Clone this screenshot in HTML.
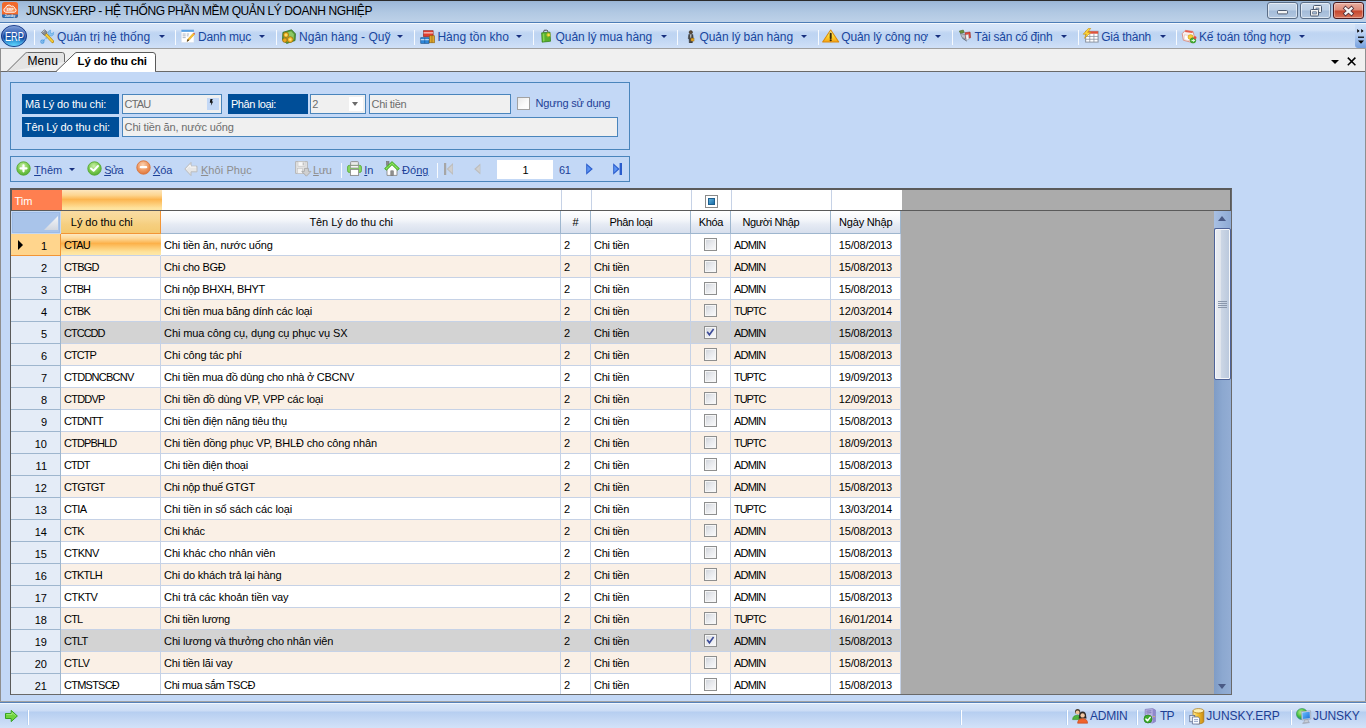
<!DOCTYPE html>
<html lang="vi"><head><meta charset="utf-8"><title>JUNSKY.ERP - HỆ THỐNG PHẦN MỀM QUẢN LÝ DOANH NGHIỆP</title>
<style>
*{box-sizing:border-box;margin:0;padding:0}
html,body{width:1366px;height:728px;overflow:hidden}
body{position:relative;background:#c3d8f6;font-family:"Liberation Sans",Arial,sans-serif;font-size:11px;color:#000}
.abs{position:absolute}
/* title bar */
#title{position:absolute;left:0;top:0;width:1366px;height:23px;background:linear-gradient(#98b3d2 0,#9fbada 2px,#b2c9e3 12px,#bdd1e8 21px,#bdd1e8 100%);border-top:1px solid #2a2a2a;border-bottom:1px solid #4d7db6}
#title .tx{position:absolute;left:26px;top:1.5px;font-size:12px;letter-spacing:-0.42px;line-height:16px;color:#000;white-space:nowrap}
.wb{position:absolute;top:1px;height:17px;width:31px;border:1px solid #5a6d86;border-radius:3px;background:linear-gradient(#c6d6e9 0,#bccfe5 48%,#a3bbd8 52%,#b3c8e1 100%);box-shadow:inset 0 0 0 1px rgba(255,255,255,.55)}
.wb.close{border-color:#4a1a1f;background:linear-gradient(#e9aea0 0,#dc8a78 48%,#c5452c 52%,#d8735a 100%);box-shadow:inset 0 0 0 1px rgba(255,255,255,.35)}
/* menu bar */
#menu{position:absolute;left:0;top:23px;width:1366px;height:25px;background:linear-gradient(#f4f8fd 0,#f4f8fd 1px,#d8e6f9 1px,#d2e2f7 7px,#c3d7f3 9px,#bed4f2 11px,#c2d7f3 17px,#d0e0f7 25px)}
.mi{position:absolute;top:29px;font-size:12px;line-height:16px;color:#19469e;white-space:nowrap}
.msep{position:absolute;top:30px;width:1px;height:15px;background:#f7fafe}
.marr{position:absolute;top:35px;width:0;height:0;border-left:3px solid transparent;border-right:3px solid transparent;border-top:3px solid #172f7e}
.mic{position:absolute;top:28.5px;width:16px;height:16px}
/* tab strip */
#tabs{position:absolute;left:0;top:48px;width:1366px;height:24px;background:#f0f0f0;border-top:1px solid #a0a0a0;border-bottom:1px solid #696969;border-left:1px solid #8f8f8f}
/* panels */
.panel{position:absolute;border:1px solid #4a85bc}
.lbl{position:absolute;height:20px;background:#004e98;color:#fff;font-size:11px;line-height:20px;white-space:nowrap;overflow:hidden}
.inp{position:absolute;height:20px;background:#f0f0f0;border:1px solid #4a85bc;color:#6d6d6d;font-size:11px;line-height:18px;white-space:nowrap;overflow:hidden}
.tb{position:absolute;top:163px;font-size:11px;line-height:14px;color:#1b3f96;white-space:nowrap}
.tb.dis{color:#8d8d8d}
.tb u{text-decoration:underline}
.tsep{position:absolute;top:163px;width:1px;height:15px;background:#f7fafe}
/* grid */
#grid{position:absolute;left:10px;top:188px;width:1222px;height:507px;background:#ababab;border:2px solid #5a5a5a;border-right:1px solid #696969;border-bottom:1px solid #696969}
.r{position:absolute;left:11px;width:890px;height:22px;background:#fff}
.r.alt{background:#faf0e6}
.r.lk{background:#d3d3d3}
.c{position:absolute;top:0;height:22px;line-height:22px;border-right:1px solid #c6d2e6;border-bottom:1px solid #c6d2e6;padding-left:3.1px;white-space:nowrap;overflow:hidden;font-size:11px}
.rh{left:0;width:50px;background:#e4ecf7;border-right:1px solid #9eb6ce;border-bottom:1px solid #9eb6ce;text-align:right;padding:0 13px 0 0}

.c1{left:50px;width:100px}.c2{left:150px;width:400px}.c3{left:550px;width:30px}.c4{left:580px;width:100px}.c5{left:680px;width:40px;padding:0}.c6{left:720px;width:100px}.c7{left:820px;width:70px;text-align:right;padding:0 8px 0 0}
.cur .rh{background:#ffd58d;border-right:1px solid #f29536;border-bottom:1px solid #f29536}
.cur .c1{border-right-color:transparent;background:linear-gradient(#fde9c2 0,#fdd99a 20%,#fcb14a 45%,#fdc468 60%,#fee29a 85%,#fee8a8 100%)}
.cura{position:absolute;left:7px;top:6px;width:0;height:0;border-top:5px solid transparent;border-bottom:5px solid transparent;border-left:5px solid #000}
.cb{position:absolute;left:13px;top:4px;width:13px;height:13px;border:1px solid #8e8f8f;background:linear-gradient(135deg,#cdd1d8 0,#e6e8ec 45%,#fbfbfc 100%);box-shadow:inset 0 0 0 1px #f6f6f6}
.cb svg{position:absolute;left:1px;top:1px}
.hd{position:absolute;top:211px;height:23px;line-height:22px;text-align:left;font-size:11px;background:linear-gradient(#fff 0,#f4f6fa 40%,#e6ebf4 60%,#d7dfed 100%);border-right:1px solid #9eb6ce;border-bottom:1px solid #9eb6ce;white-space:nowrap;overflow:hidden}
.fl{position:absolute;top:190px;height:21px;background:#fff;border-right:1px solid #c6d2e6}
/* status bar */
#status{position:absolute;left:0;top:701px;width:1366px;height:27px;background:linear-gradient(#a0a0a0 0,#a0a0a0 1px,#5681ba 1px,#5681ba 2px,#f2f7fd 2px,#f2f7fd 3px,#d7e5f8 3px,#cbdcf5 10px,#b6cef0 11px,#c3d7f4 18px,#d2e2f8 27px)}
.st{position:absolute;top:709px;font-size:12px;line-height:14px;color:#1d3f94;white-space:nowrap}
.ssep{position:absolute;top:710px;width:1px;height:15px;background:#fff;box-shadow:-1px 0 0 rgba(160,195,240,.45)}
.hrh{background:#a9c4ea;border:1px solid #c4d8f3;box-shadow:inset 0 0 0 1px #9dbbe6}
.hsel{background:linear-gradient(#fadca3 0,#f8d793 35%,#f6cf80 60%,#f4c970 100%);border-right:1px solid #f29536;border-bottom:1px solid #f29536}
.rh span{position:relative;top:1px}

</style></head><body>
<div id="title">
 <svg class="abs" style="left:2px;top:1px" width="16" height="16" viewBox="0 0 16 16"><rect x="0" y="0" width="16" height="16" rx="2.6" fill="#f26a2c"/><path d="M0 12.4 H16 V13.6 Q16 16 13.4 16 H2.6 Q0 16 0 13.4 Z" fill="#2c6db0"/><path d="M3.6 10.2 a2.3 2.3 0 0 1 .2-4.5 a3 3 0 0 1 5.4-1.4 a2.6 2.6 0 0 1 3.6 2.2 a1.9 1.9 0 0 1 -.4 3.7 z" fill="#f58a55" stroke="#fff" stroke-width="1"/><text x="8.2" y="8.9" font-size="3.4" fill="#fff" text-anchor="middle" font-family="Liberation Sans,sans-serif" font-weight="bold">ERP</text><text x="8" y="15.2" font-size="3" fill="#fff" text-anchor="middle" font-family="Liberation Sans,sans-serif" font-weight="bold">Junsky</text></svg>
 <div class="tx">JUNSKY.ERP - HỆ THỐNG PHẦN MỀM QUẢN LÝ DOANH NGHIỆP</div>
 <div class="wb" style="left:1267px"><svg class="abs" style="left:9px;top:7px" width="11" height="5"><rect x=".5" y=".5" width="10" height="3.4" rx="1" fill="#f4f4f4" stroke="#4d5b70"/></svg></div>
 <div class="wb" style="left:1300px"><svg class="abs" style="left:8px;top:2px" width="14" height="12"><rect x="4.5" y=".5" width="8" height="7" rx="1" fill="#f4f4f4" stroke="#4d5b70"/><rect x="7" y="3" width="3" height="2" fill="#a9bfdb" stroke="#4d5b70" stroke-width=".6"/><rect x="1.5" y="4.5" width="8" height="6.5" rx="1" fill="#f4f4f4" stroke="#4d5b70"/><rect x="3.7" y="6.8" width="3.6" height="2.2" fill="#a9bfdb" stroke="#4d5b70" stroke-width=".6"/></svg></div>
 <div class="wb close" style="left:1333px"><svg class="abs" style="left:8px;top:1.6px" width="13" height="12" viewBox="0 0 13 12"><path d="M3.6 3.4 L9.4 8.6 M9.4 3.4 L3.6 8.6" stroke="#53313a" stroke-width="4" stroke-linecap="square"/><path d="M3.6 3.4 L9.4 8.6 M9.4 3.4 L3.6 8.6" stroke="#f4f4f4" stroke-width="2.4" stroke-linecap="square"/></svg></div>
</div>
<div id="menu"></div>
<svg class="abs" style="left:0;top:24px" width="29" height="25" viewBox="0 0 29 25"><defs><linearGradient id="orb" x1="0" y1="0" x2="0" y2="1"><stop offset="0" stop-color="#7d9dd6"/><stop offset=".3" stop-color="#4a72be"/><stop offset=".48" stop-color="#1c4aa2"/><stop offset=".62" stop-color="#0f3d96"/><stop offset=".85" stop-color="#2a8fd6"/><stop offset="1" stop-color="#46c4f2"/></linearGradient><radialGradient id="orbg" cx="50%" cy="100%" r="60%"><stop offset="0" stop-color="#5fd4fa" stop-opacity=".95"/><stop offset="1" stop-color="#3fb8f0" stop-opacity="0"/></radialGradient></defs><ellipse cx="14" cy="13" rx="12" ry="10.4" fill="#6fd0f6" opacity=".35"/><ellipse cx="14" cy="12" rx="12.6" ry="10.5" fill="url(#orb)" stroke="#1f3f8c" stroke-width="1"/><ellipse cx="14" cy="12" rx="11.4" ry="9.4" fill="none" stroke="#86a5dc" stroke-width=".7" opacity=".7"/><ellipse cx="14" cy="12" rx="12" ry="10" fill="url(#orbg)"/><text x="14.4" y="16.6" font-size="12.6" fill="#fff" text-anchor="middle" font-family="Liberation Sans,sans-serif" textLength="19" lengthAdjust="spacingAndGlyphs">ERP</text></svg>
<div class="msep" style="left:34px"></div>
<div class="abs" style="left:39.6px;top:28.6px"><svg width="14.8" height="15.4" preserveAspectRatio="none" style="display:block" viewBox="0 0 16 16"><path d="M2.2 13.8 L9 7" stroke="#6fb2e8" stroke-width="1.6" stroke-dasharray="1.6 1.1" fill="none"/><circle cx="2.6" cy="13.2" r="1.7" fill="none" stroke="#4a9be0" stroke-width="1.1"/><path d="M11.5 1.2 a3 3 0 0 0 -2.3 4.6 l1.6 1.2 a3 3 0 0 0 4-3.6 l-1.8 1.6 -1.5-.5 -.3-1.6 z" fill="#8cc4ee" stroke="#4a9be0" stroke-width=".6"/><path d="M5.2 4.6 L13.6 13" stroke="#b8860b" stroke-width="3.2" stroke-linecap="round"/><path d="M5.2 4.6 L13.4 12.8" stroke="#f6cf3c" stroke-width="2" stroke-linecap="round"/><path d="M1.6 3.6 L5 .8 L7.8 3.6 L4.6 6.6 Z" fill="#8a8d92" stroke="#55585c" stroke-width=".7"/><path d="M2.6 3.4 L5 1.6" stroke="#d5d8dc" stroke-width=".9"/></svg></div>
<div class="mi" style="left:57.1px;letter-spacing:0.016px">Quản trị hệ thống</div>
<div class="marr" style="left:158.5px"></div>
<div class="msep" style="left:175px"></div>
<div class="abs" style="left:180.6px;top:29.0px"><svg width="14.4" height="14.4" preserveAspectRatio="none" style="display:block" viewBox="0 0 16 16"><rect x=".4" y="1" width="14" height="14" fill="#fff" stroke="#d3dbe8" stroke-width=".5"/><rect x=".4" y=".8" width="14" height="2.4" fill="#57a0e4"/><path d="M1.8 5.6h3.4M1.8 7.6h3.4M1.8 9.6h3.4M6.4 5.6h2.6M6.4 7.6h2" stroke="#9aa4b4" stroke-width=".9"/><path d="M6.8 13.6 L7.6 11.2 L13.6 4.6 L15 6 L9 12.6 Z" fill="#f9c22e" stroke="#c98a12" stroke-width=".5"/><path d="M13.6 4.6 L15 6 L15.6 5.2 L14.4 3.8Z" fill="#e8463e"/><path d="M6.4 14.4 L7.6 11.2 L9 12.6 Z" fill="#3a2a1a"/></svg></div>
<div class="mi" style="left:198.1px;letter-spacing:-0.236px">Danh mục</div>
<div class="marr" style="left:259.4px"></div>
<div class="msep" style="left:276px"></div>
<div class="abs" style="left:281.4px;top:28.6px"><svg width="15.4" height="15.4" preserveAspectRatio="none" style="display:block" viewBox="0 0 16 16"><path d="M2 3.5 L11 .8 L15 5 L14.6 12 L6 15 L1.6 11 Z" fill="#5a9e3a" stroke="#2f6a1c" stroke-width=".8"/><path d="M3.4 4.6 L10.6 2.4 L13.4 5.4 L13 11 L6.4 13.2 L3.2 10.2 Z" fill="#8cc764"/><circle cx="5.2" cy="6.2" r="2.7" fill="#f3c02c" stroke="#9a6a0a" stroke-width=".8"/><circle cx="9.6" cy="11" r="3" fill="#f3c02c" stroke="#9a6a0a" stroke-width=".8"/><circle cx="4" cy="11.6" r="2.3" fill="#e9a91c" stroke="#9a6a0a" stroke-width=".8"/><circle cx="5.2" cy="6.2" r="1" fill="#fbe28a"/><circle cx="9.6" cy="11" r="1.2" fill="#fbe28a"/></svg></div>
<div class="mi" style="left:299.09999999999997px;letter-spacing:-0.006px">Ngân hàng - Quỹ</div>
<div class="marr" style="left:397.4px"></div>
<div class="msep" style="left:414px"></div>
<div class="abs" style="left:420px;top:29.6px"><svg width="15.2" height="14.4" preserveAspectRatio="none" style="display:block" viewBox="0 0 16 16"><rect x="3.8" y=".8" width="10" height="6.4" fill="#e23c2e" stroke="#8f1d14" stroke-width=".7"/><path d="M3.8 3.2h10" stroke="#fff" stroke-width="1"/><rect x="10" y="6.4" width="5.2" height="7.8" fill="#e0a62c" stroke="#8d6412" stroke-width=".7"/><path d="M12.6 6.4v7.8" stroke="#8d6412" stroke-width=".7"/><rect x=".8" y="8.6" width="8.6" height="6.2" fill="#2f86d6" stroke="#154f8c" stroke-width=".7"/><path d="M.8 10.8h8.6" stroke="#fff" stroke-width=".9"/><path d="M5 8.6v6.2" stroke="#154f8c" stroke-width=".6"/></svg></div>
<div class="mi" style="left:437.4px;letter-spacing:0.01px">Hàng tồn kho</div>
<div class="marr" style="left:516.3px"></div>
<div class="msep" style="left:533px"></div>
<div class="abs" style="left:538.6px;top:28.8px"><svg width="14" height="14" preserveAspectRatio="none" style="display:block" viewBox="0 0 16 16"><path d="M5.4 4.2 V2.6 a1.2 1.2 0 0 1 1.2-1.2 h2.2 a1.2 1.2 0 0 1 1.2 1.2 V4.2" fill="none" stroke="#3e3e3e" stroke-width="1.1"/><path d="M3 4.4 L12.6 3.6 L13.2 14 L3.6 15 Z" fill="#58b02c" stroke="#2f7a14" stroke-width=".8"/><path d="M4.2 5.4 L6 5.2 L6.4 14 L4.6 14.2 Z" fill="#86d352"/><path d="M10 4 l1.2 1.4 1.8-.4 -.8 1.6 1 1.6 -1.9-.2 -1.2 1.4 -.3-1.8 -1.7-.8 1.7-.8z" fill="#ffe14a" stroke="#c9a50e" stroke-width=".4"/></svg></div>
<div class="mi" style="left:555.6px;letter-spacing:-0.091px">Quản lý mua hàng</div>
<div class="marr" style="left:660.5px"></div>
<div class="msep" style="left:677px"></div>
<div class="abs" style="left:683.5px;top:29.5px"><svg width="13.6" height="13.6" preserveAspectRatio="none" style="display:block" viewBox="0 0 16 16"><circle cx="8" cy="2.6" r="2" fill="#5b4a36" stroke="#2e2418" stroke-width=".5"/><path d="M5.6 5.2 h4.8 l.6 5 h-1 l-.2 5 h-3.6 l-.2-5 h-1 z" fill="#4a4a4a" stroke="#222" stroke-width=".5"/><path d="M7.4 5.2 h1.2 l-.2 4 h-.8z" fill="#f1f1f1"/><rect x="8.2" y="9.6" width="3.6" height="3.4" fill="#e5a623" stroke="#8d6412" stroke-width=".5"/></svg></div>
<div class="mi" style="left:699.5px;letter-spacing:-0.078px">Quản lý bán hàng</div>
<div class="marr" style="left:801.4px"></div>
<div class="msep" style="left:818px"></div>
<div class="abs" style="left:822.2px;top:28.6px"><svg width="17.4" height="14.4" preserveAspectRatio="none" style="display:block" viewBox="0 0 16 16"><defs><linearGradient id="wg" x1="0" y1="0" x2="0" y2="1"><stop offset="0" stop-color="#fff3a0"/><stop offset=".55" stop-color="#ffd42a"/><stop offset="1" stop-color="#f5a216"/></linearGradient></defs><path d="M8 1 L15.4 14.4 L.6 14.4 Z" fill="url(#wg)" stroke="#d98a0c" stroke-width="1" stroke-linejoin="round"/><path d="M8 5.2 V10.4" stroke="#3a2a0a" stroke-width="1.8" stroke-linecap="round"/><circle cx="8" cy="12.5" r="1" fill="#3a2a0a"/></svg></div>
<div class="mi" style="left:841.1999999999999px;letter-spacing:-0.113px">Quản lý công nợ</div>
<div class="marr" style="left:935.3px"></div>
<div class="msep" style="left:952px"></div>
<div class="abs" style="left:957.6px;top:29.4px"><svg width="14" height="13.4" preserveAspectRatio="none" style="display:block" viewBox="0 0 16 16"><path d="M1.5 2.5 L6 1.2 L7.2 4.2 L3 5.6 Z" fill="#6d8f3c" stroke="#3d5a18" stroke-width=".6"/><path d="M2.8 5.2 L8.6 7.2 L9.6 12.6 L4.4 10 Z" fill="#b9bec6" stroke="#5d6470" stroke-width=".6"/><path d="M8 4.4 L13.8 3.6 L14.4 10.4 L9 11.6 Z" fill="#e2483a" stroke="#8f1d14" stroke-width=".6"/><path d="M8.6 7.2 L12 6.4 L12.6 12.2 L9.6 13.4 Z" fill="#f1f1f1" stroke="#7d8794" stroke-width=".5"/><path d="M5 11 L10 14.4" stroke="#5d6470" stroke-width="1.1"/></svg></div>
<div class="mi" style="left:974.4px;letter-spacing:-0.225px">Tài sản cố định</div>
<div class="marr" style="left:1061.3px"></div>
<div class="msep" style="left:1078px"></div>
<div class="abs" style="left:1082.4px;top:28.2px"><svg width="16.6" height="15" preserveAspectRatio="none" style="display:block" viewBox="0 0 16 16"><rect x="3.5" y="3.5" width="12" height="11.5" fill="#fff" stroke="#8a92a0" stroke-width="1"/><rect x="3.5" y="3.5" width="12" height="2.6" fill="#e0523c"/><path d="M3.5 9h12M3.5 12h12M7.5 6v9M11.5 6v9" stroke="#8a92a0" stroke-width=".8"/><path d="M6.2 .4 L1.2 6.6 L4.2 6.6 L2.4 11 L8.6 4.6 L5.4 4.6 L8.4 .4Z" fill="#ffd83a" stroke="#c9920e" stroke-width=".7" stroke-linejoin="round"/></svg></div>
<div class="mi" style="left:1101.2px;letter-spacing:-0.249px">Giá thành</div>
<div class="marr" style="left:1159.5px"></div>
<div class="msep" style="left:1176px"></div>
<div class="abs" style="left:1181px;top:28.6px"><svg width="16" height="15" preserveAspectRatio="none" style="display:block" viewBox="0 0 16 16"><path d="M1.2 5 L4.4 1.4 L12 2.6 L13.6 9 L9.6 14 L2.4 12 Z" fill="#f7f1ee" stroke="#d9897c" stroke-width=".9"/><path d="M4.4 1.4 L12 2.6 L11.4 4.2 L4 3.2Z" fill="#e6594a"/><path d="M3.4 6.2 L10 7.2 L9.2 12.6 L3 11.4Z" fill="#fff" stroke="#e3b4ab" stroke-width=".6"/><circle cx="9.6" cy="8.6" r="2.6" fill="#f8cf3a" stroke="#c9920e" stroke-width=".6"/><circle cx="12" cy="12.2" r="2.8" fill="#4cb83a" stroke="#2a7d1c" stroke-width=".6"/><path d="M10.6 12.2 h2.8 M12.2 11 l1.4 1.2 -1.4 1.2" stroke="#fff" stroke-width=".9" fill="none"/><circle cx="14" cy="9.2" r="1.5" fill="#e6483a"/></svg></div>
<div class="mi" style="left:1198.9px;letter-spacing:-0.057px">Kế toán tổng hợp</div>
<div class="marr" style="left:1299.4px"></div>
<div class="abs" style="left:1355px;top:24px;width:11px;height:24px;background:linear-gradient(#cfe0f8 0,#bdd3f3 35%,#9dbdea 65%,#76a0de 100%);border-bottom-left-radius:3px"></div>
<svg class="abs" style="left:1356px;top:28px" width="9" height="18" viewBox="0 0 9 18"><path d="M1.2 1 L3.6 2.9 L1.2 4.8 Z M5.2 1 L7.6 2.9 L5.2 4.8 Z" fill="#000"/><rect x="2" y="8.6" width="6" height="1.2" fill="#000"/><path d="M2 12.4 H8 L5 15.8 Z" fill="#000"/></svg>
<div id="tabs"></div>
<svg class="abs" style="left:0;top:49px" width="170" height="23" viewBox="0 0 170 23">
 <path d="M7 22.5 L25.4 4.2 Q26.2 3.5 27.4 3.5 L62.4 3.5 Q64.5 3.7 64.5 6 L64.5 13" fill="#e4e4e4" stroke="#6a6a6a" stroke-width="1"/>
 <path d="M56 22.5 L75 4.2 Q75.8 3.5 77 3.5 L153 3.5 Q155.5 3.7 155.5 6.2 L155.5 22.5" fill="#fff" stroke="#5a5a5a" stroke-width="1"/>
 <rect x="57" y="22" width="98" height="1" fill="#fff"/>
</svg>
<div class="abs" style="left:27.5px;top:54px;font-size:12px;line-height:14px;letter-spacing:.1px;color:#000">Menu</div>
<div class="abs" style="left:77.6px;top:53.7px;font-size:11.4px;letter-spacing:-.12px;line-height:14px;font-weight:bold;color:#000;white-space:nowrap">Lý do thu chi</div>
<div class="abs" style="left:1330.6px;top:59.6px;width:0;height:0;border-left:4.4px solid transparent;border-right:4.4px solid transparent;border-top:4.8px solid #000"></div>
<svg class="abs" style="left:1347px;top:57px" width="9" height="9"><path d="M.8 .6 L8.4 8.2 M8.4 .6 L.8 8.2" stroke="#000" stroke-width="1.5"/></svg>
<div class="abs" style="left:1365px;top:49px;width:1px;height:652px;background:#8f8f8f"></div>
<div class="abs" style="left:0;top:72px;width:1px;height:629px;background:#8f8f8f"></div>

<div class="panel" style="left:10px;top:82px;width:620px;height:68px"></div>
<div class="lbl" style="left:22px;top:94px;width:97px;letter-spacing:-0.157px;padding-left:3.0px">Mã Lý do thu chi:</div>
<div class="inp" style="left:122px;top:94px;width:100px;letter-spacing:-0.807px;padding-left:1.6px">CTAU</div>
<div class="abs" style="left:207px;top:98px;width:12px;height:12px;background:#c3d8f6"></div>
<svg class="abs" style="left:209.4px;top:99px" width="5" height="7" viewBox="0 0 6 9"><path d="M1.6 0 L4.6 0 L3.4 3.2 L5.2 3.2 L2.2 8.6 L2.8 4.8 L.8 4.8 Z" fill="#111"/></svg>
<div class="lbl" style="left:228px;top:94px;width:80px;letter-spacing:-0.393px;padding-left:2.9px">Phân loại:</div>
<div class="inp" style="left:310px;top:94px;width:56px;letter-spacing:-0.418px;padding-left:1.3px">2</div>
<div class="abs" style="left:349px;top:97px;width:14px;height:14px;background:#fff"></div>
<div class="abs" style="left:351.5px;top:102px;width:0;height:0;border-left:3.5px solid transparent;border-right:3.5px solid transparent;border-top:4px solid #6b6b6b"></div>
<div class="inp" style="left:369px;top:94px;width:142px;letter-spacing:-0.325px;padding-left:1.6px">Chi tiền</div>
<div class="abs" style="left:517px;top:97px;width:13px;height:13px;background:linear-gradient(135deg,#e9e9e9,#fbfbfb 60%,#fff);border:1px solid #a2a2a2"></div>
<div class="abs" style="left:535.6px;top:96px;font-size:11px;line-height:14px;color:#1e3f96;white-space:nowrap;letter-spacing:-0.185px">Ngưng sử dụng</div>
<div class="lbl" style="left:22px;top:117px;width:97px;letter-spacing:-0.125px;padding-left:2.8px">Tên Lý do thu chi:</div>
<div class="inp" style="left:122px;top:117px;width:496px;letter-spacing:-0.151px;padding-left:1.6px">Chi tiền ăn, nước uống</div>
<div class="panel" style="left:10px;top:156px;width:620px;height:26px"></div>
<div class="abs" style="left:16px;top:161px"><svg width="15" height="15" viewBox="0 0 15 15"><defs><radialGradient id="ga" cx="45%" cy="32%" r="72%"><stop offset="0" stop-color="#c9f0a8"/><stop offset=".55" stop-color="#7fcd52"/><stop offset="1" stop-color="#4faa2e"/></radialGradient></defs><circle cx="7.5" cy="7.5" r="6.7" fill="url(#ga)" stroke="#56a836" stroke-width=".9"/><path d="M7.5 4.3 V10.3 M4.5 7.3 H10.5" stroke="#fff" stroke-width="2.2" stroke-linecap="round"/></svg></div>
<div class="tb" style="left:34.1px;letter-spacing:-0.004px"><u>T</u>hêm</div>
<div class="abs" style="left:86.5px;top:161px"><svg width="15" height="15" viewBox="0 0 15 15"><circle cx="7.5" cy="7.5" r="6.7" fill="url(#ga)" stroke="#56a836" stroke-width=".9"/><path d="M4 7.4 L6.6 9.8 L11 5" stroke="#fff" stroke-width="2" fill="none" stroke-linecap="round" stroke-linejoin="round"/></svg></div>
<div class="tb" style="left:104.2px;letter-spacing:-0.64px"><u>S</u>ửa</div>
<div class="abs" style="left:135.6px;top:160.4px"><svg width="15" height="15" viewBox="0 0 15 15"><defs><radialGradient id="go" cx="45%" cy="32%" r="72%"><stop offset="0" stop-color="#fbd3b4"/><stop offset=".55" stop-color="#ef9a64"/><stop offset="1" stop-color="#dd7238"/></radialGradient></defs><circle cx="7.5" cy="7.5" r="6.7" fill="url(#go)" stroke="#d9763e" stroke-width=".9"/><path d="M4.8 7.2 H10.2" stroke="#fff" stroke-width="2.2" stroke-linecap="round"/></svg></div>
<div class="tb" style="left:152.9px;letter-spacing:-0.057px"><u>X</u>óa</div>
<div class="abs" style="left:183.6px;top:161px"><svg width="14" height="16" viewBox="0 0 14 16"><path d="M.8 8 L7 1.4 L7 5.2 L13 5.2 L13 10.8 L7 10.8 L7 14.6 Z" fill="#e6e6e6" stroke="#bcbcbc" stroke-width="1" stroke-linejoin="round"/><path d="M2.4 8 L6.2 4 V6 H12" fill="none" stroke="#f8f8f8" stroke-width="1"/></svg></div>
<div class="tb dis" style="left:200.9px;letter-spacing:0.084px"><u>K</u>hôi Phục</div>
<div class="abs" style="left:295.4px;top:160.8px"><svg width="17" height="16" viewBox="0 0 17 16"><path d="M.6 .6 H12.4 V12.4 H.6 Z" fill="#e3e3e3" stroke="#b5b5b5" stroke-width="1"/><rect x="3" y=".8" width="7" height="4.4" fill="#f7f7f7" stroke="#c2c2c2" stroke-width=".6"/><rect x="7.6" y="1.4" width="1.6" height="3" fill="#c2c2c2"/><rect x="2.4" y="7.4" width="5" height="5" fill="#f3f3f3" stroke="#c2c2c2" stroke-width=".6"/><path d="M9.4 7.4 H13.4 V10.4 H16 L11.4 15.2 L6.8 10.4 H9.4 Z" fill="#d0d0d0" stroke="#a9a9a9" stroke-width=".9" stroke-linejoin="round"/></svg></div>
<div class="tb dis" style="left:313.09999999999997px;letter-spacing:-0.4px"><u>L</u>ưu</div>
<div class="abs" style="left:346.6px;top:160.6px"><svg width="15" height="15" viewBox="0 0 15 15"><rect x="3.6" y=".6" width="7.8" height="5" rx=".8" fill="#e9e9e9" stroke="#8a8a8a" stroke-width=".9"/><rect x=".6" y="4.4" width="13.8" height="7" rx="1.6" fill="#86d860" stroke="#5cab3c" stroke-width=".9"/><rect x="3.4" y="4.6" width="8.2" height="2.4" fill="#f4f4f4" stroke="#8a8a8a" stroke-width=".7"/><rect x="3.4" y="8.4" width="8.2" height="6" fill="#fff" stroke="#8a8a8a" stroke-width=".9"/></svg></div>
<div class="tb" style="left:364.29999999999995px;letter-spacing:-0.087px"><u>I</u>n</div>
<div class="abs" style="left:383.6px;top:160.6px"><svg width="16" height="15" viewBox="0 0 16 15"><rect x="2.4" y=".4" width="2.6" height="4" fill="#8a8a8a" stroke="#6a6a6a" stroke-width=".5"/><path d="M3 7.2 V14.4 H13 V7.2 L8 2.8 Z" fill="#fdfdfd" stroke="#8a8a8a" stroke-width=".9"/><rect x="6.8" y="9.8" width="2.6" height="4.6" fill="#8f8f8f" stroke="#6c6c6c" stroke-width=".5"/><path d="M.6 7.6 L8 .6 L15.4 7.6 L13.6 9.2 L8 3.8 L2.4 9.2 Z" fill="#6fd440" stroke="#3aa022" stroke-width=".8" stroke-linejoin="round"/><path d="M2 7.8 L8 2.2 L14 7.8" fill="none" stroke="#b9f29a" stroke-width=".8" stroke-dasharray="1 1"/></svg></div>
<div class="tb" style="left:402.0px;letter-spacing:0.026px">Đó<u>ng</u></div>
<div class="marr" style="left:69px;top:168px"></div>
<div class="tsep" style="left:341px"></div><div class="tsep" style="left:437px"></div>
<svg class="abs" style="left:444px;top:163px" width="9" height="12" viewBox="0 0 9 12"><rect x="0" y="0" width="2.2" height="12" fill="#a6a6a6"/><path d="M9 0 L9 12 L2.6 6Z" fill="#bdbdbd"/><path d="M8.4 2 L8.4 10 L4.2 6Z" fill="#cfcfcf"/></svg>
<svg class="abs" style="left:474px;top:163px" width="7" height="12" viewBox="0 0 7 12"><path d="M6.4 .4 L6.4 11.6 L.2 6Z" fill="#bdbdbd"/><path d="M5.8 2.4 L5.8 9.6 L2 6Z" fill="#d0d0d0"/></svg>
<div class="abs" style="left:497px;top:160px;width:56px;height:19px;background:#fff;font-size:11px;line-height:20px;text-align:center;color:#000;padding-left:1px">1</div>
<div class="tb" style="left:559px;letter-spacing:-.4px">61</div>
<svg class="abs" style="left:586px;top:163px" width="7" height="12" viewBox="0 0 7 12"><path d="M.2 .2 L6.8 6 L.2 11.8Z" fill="#2a5ccc"/><path d="M1.2 2.6 L5 6 L1.2 9.4Z" fill="#5b93f2"/></svg>
<svg class="abs" style="left:613px;top:163px" width="10" height="12" viewBox="0 0 10 12"><path d="M.2 .2 L6.6 6 L.2 11.8Z" fill="#2a5ccc"/><path d="M1.2 2.6 L4.8 6 L1.2 9.4Z" fill="#5b93f2"/><rect x="6.6" y="0" width="2.4" height="12" fill="#2a5ccc"/></svg>

<!-- grid -->
<div id="grid"></div>
<div class="abs" style="left:12px;top:190px;width:50px;height:20px;background:#ff7f50;color:#fff;font-size:11px;line-height:22px;padding-left:2.4px;letter-spacing:-.5px">Tìm</div>
<div class="abs" style="left:62px;top:190px;width:100px;height:21px;background:linear-gradient(#fde6bd 0,#fdd590 25%,#fcb550 45%,#fdc56b 60%,#fee19b 85%,#fee7a7 100%)"></div>
<div class="fl" style="left:162px;width:400px"></div>
<div class="fl" style="left:562px;width:30px"></div>
<div class="fl" style="left:592px;width:100px"></div>
<div class="fl" style="left:692px;width:40px"><i class="abs" style="left:13px;top:5px;width:13px;height:13px;border:1px solid #8a8a8a;background:#fff;display:block"><i class="abs" style="left:2px;top:2px;width:7px;height:7px;background:linear-gradient(135deg,#5fb0dc,#1b6ea8);border:1px solid #1e5f8e;display:block"></i></i></div>
<div class="fl" style="left:732px;width:100px"></div>
<div class="fl" style="left:832px;width:70px;border-right:none"></div>
<div class="abs" style="left:12px;top:210px;width:1219px;height:1px;background:#5a5a5a"></div><div class="abs" style="left:1230px;top:190px;width:1px;height:21px;background:#5a5a5a"></div>
<div class="hd hrh" style="left:11px;width:50px"><svg class="abs" style="left:30px;top:4px" width="16" height="14"><defs><linearGradient id="tg" x1="0" y1="0" x2="0" y2="1"><stop offset="0" stop-color="#f4f6f9"/><stop offset="1" stop-color="#d2d7e0"/></linearGradient></defs><path d="M16 0 L16 14 L2 14 Z" fill="url(#tg)"/></svg></div>
<div class="hd hsel" style="left:61px;width:100px;padding-left:9.8px;letter-spacing:-0.037px">Lý do thu chi</div>
<div class="hd" style="left:161px;width:400px;padding-left:148.4px;letter-spacing:-0.052px">Tên Lý do thu chi</div>
<div class="hd" style="left:561px;width:30px;padding-left:11.6px;letter-spacing:0.082px">#</div>
<div class="hd" style="left:591px;width:100px;padding-left:18.4px;letter-spacing:-0.308px">Phân loại</div>
<div class="hd" style="left:691px;width:40px;padding-left:7.7px;letter-spacing:-0.373px">Khóa</div>
<div class="hd" style="left:731px;width:100px;padding-left:11.4px;letter-spacing:-0.344px">Người Nhập</div>
<div class="hd" style="left:831px;width:70px;padding-left:8.1px;letter-spacing:-0.204px">Ngày Nhập</div>
<div id="rows" class="abs" style="left:0;top:0;width:1231px;height:694px;overflow:hidden">

<div class="r cur" style="top:234px"><div class="c rh"><i class=cura></i><span>1</span></div><div class="c c1" style="letter-spacing:-0.807px">CTAU</div><div class="c c2" style="letter-spacing:-0.178px">Chi tiền ăn, nước uống</div><div class="c c3">2</div><div class="c c4" style="letter-spacing:-0.3px">Chi tiền</div><div class="c c5"><i class="cb"></i></div><div class="c c6" style="letter-spacing:-0.829px">ADMIN</div><div class="c c7" style="letter-spacing:-0.185px">15/08/2013</div></div>
<div class="r alt" style="top:256px"><div class="c rh"><span>2</span></div><div class="c c1" style="letter-spacing:-0.76px">CTBGD</div><div class="c c2" style="letter-spacing:-0.254px">Chi cho BGĐ</div><div class="c c3">2</div><div class="c c4" style="letter-spacing:-0.3px">Chi tiền</div><div class="c c5"><i class="cb"></i></div><div class="c c6" style="letter-spacing:-0.829px">ADMIN</div><div class="c c7" style="letter-spacing:-0.185px">15/08/2013</div></div>
<div class="r" style="top:278px"><div class="c rh"><span>3</span></div><div class="c c1" style="letter-spacing:-1.011px">CTBH</div><div class="c c2" style="letter-spacing:-0.343px">Chi nộp BHXH, BHYT</div><div class="c c3">2</div><div class="c c4" style="letter-spacing:-0.3px">Chi tiền</div><div class="c c5"><i class="cb"></i></div><div class="c c6" style="letter-spacing:-0.829px">ADMIN</div><div class="c c7" style="letter-spacing:-0.185px">15/08/2013</div></div>
<div class="r alt" style="top:300px"><div class="c rh"><span>4</span></div><div class="c c1" style="letter-spacing:-0.859px">CTBK</div><div class="c c2" style="letter-spacing:-0.2px">Chi tiền mua băng dính các loại</div><div class="c c3">2</div><div class="c c4" style="letter-spacing:-0.3px">Chi tiền</div><div class="c c5"><i class="cb"></i></div><div class="c c6" style="letter-spacing:-1.073px">TUPTC</div><div class="c c7" style="letter-spacing:-0.185px">12/03/2014</div></div>
<div class="r lk" style="top:322px"><div class="c rh"><span>5</span></div><div class="c c1" style="letter-spacing:-1.006px">CTCCDD</div><div class="c c2" style="letter-spacing:-0.109px">Chi mua công cụ, dụng cụ phục vụ SX</div><div class="c c3">2</div><div class="c c4" style="letter-spacing:-0.3px">Chi tiền</div><div class="c c5"><i class="cb"><svg width="9" height="9" viewBox="0 0 9 9"><path d="M1.2 3.8 L3.4 6.8 L7.6 1" fill="none" stroke="#3c4b98" stroke-width="1.6"/></svg></i></div><div class="c c6" style="letter-spacing:-0.829px">ADMIN</div><div class="c c7" style="letter-spacing:-0.185px">15/08/2013</div></div>
<div class="r alt" style="top:344px"><div class="c rh"><span>6</span></div><div class="c c1" style="letter-spacing:-0.993px">CTCTP</div><div class="c c2" style="letter-spacing:-0.118px">Chi công tác phí</div><div class="c c3">2</div><div class="c c4" style="letter-spacing:-0.3px">Chi tiền</div><div class="c c5"><i class="cb"></i></div><div class="c c6" style="letter-spacing:-0.829px">ADMIN</div><div class="c c7" style="letter-spacing:-0.185px">15/08/2013</div></div>
<div class="r" style="top:366px"><div class="c rh"><span>7</span></div><div class="c c1" style="letter-spacing:-0.76px">CTDDNCBCNV</div><div class="c c2" style="letter-spacing:-0.239px">Chi tiền mua đồ dùng cho nhà ở CBCNV</div><div class="c c3">2</div><div class="c c4" style="letter-spacing:-0.3px">Chi tiền</div><div class="c c5"><i class="cb"></i></div><div class="c c6" style="letter-spacing:-1.073px">TUPTC</div><div class="c c7" style="letter-spacing:-0.185px">19/09/2013</div></div>
<div class="r alt" style="top:388px"><div class="c rh"><span>8</span></div><div class="c c1" style="letter-spacing:-0.804px">CTDDVP</div><div class="c c2" style="letter-spacing:-0.173px">Chi tiền đồ dùng VP, VPP các loại</div><div class="c c3">2</div><div class="c c4" style="letter-spacing:-0.3px">Chi tiền</div><div class="c c5"><i class="cb"></i></div><div class="c c6" style="letter-spacing:-1.073px">TUPTC</div><div class="c c7" style="letter-spacing:-0.185px">12/09/2013</div></div>
<div class="r" style="top:410px"><div class="c rh"><span>9</span></div><div class="c c1" style="letter-spacing:-0.932px">CTDNTT</div><div class="c c2" style="letter-spacing:-0.189px">Chi tiền điện năng tiêu thụ</div><div class="c c3">2</div><div class="c c4" style="letter-spacing:-0.3px">Chi tiền</div><div class="c c5"><i class="cb"></i></div><div class="c c6" style="letter-spacing:-0.829px">ADMIN</div><div class="c c7" style="letter-spacing:-0.185px">15/08/2013</div></div>
<div class="r alt" style="top:432px"><div class="c rh"><span>10</span></div><div class="c c1" style="letter-spacing:-0.886px">CTDPBHLD</div><div class="c c2" style="letter-spacing:-0.142px">Chi tiền đồng phục VP, BHLĐ cho công nhân</div><div class="c c3">2</div><div class="c c4" style="letter-spacing:-0.3px">Chi tiền</div><div class="c c5"><i class="cb"></i></div><div class="c c6" style="letter-spacing:-1.073px">TUPTC</div><div class="c c7" style="letter-spacing:-0.185px">18/09/2013</div></div>
<div class="r" style="top:454px"><div class="c rh"><span>11</span></div><div class="c c1" style="letter-spacing:-1.007px">CTDT</div><div class="c c2" style="letter-spacing:-0.219px">Chi tiền điện thoại</div><div class="c c3">2</div><div class="c c4" style="letter-spacing:-0.3px">Chi tiền</div><div class="c c5"><i class="cb"></i></div><div class="c c6" style="letter-spacing:-0.829px">ADMIN</div><div class="c c7" style="letter-spacing:-0.185px">15/08/2013</div></div>
<div class="r alt" style="top:476px"><div class="c rh"><span>12</span></div><div class="c c1" style="letter-spacing:-0.802px">CTGTGT</div><div class="c c2" style="letter-spacing:-0.311px">Chi nộp thuế GTGT</div><div class="c c3">2</div><div class="c c4" style="letter-spacing:-0.3px">Chi tiền</div><div class="c c5"><i class="cb"></i></div><div class="c c6" style="letter-spacing:-0.829px">ADMIN</div><div class="c c7" style="letter-spacing:-0.185px">15/08/2013</div></div>
<div class="r" style="top:498px"><div class="c rh"><span>13</span></div><div class="c c1" style="letter-spacing:-0.714px">CTIA</div><div class="c c2" style="letter-spacing:-0.076px">Chi tiền in sổ sách các loại</div><div class="c c3">2</div><div class="c c4" style="letter-spacing:-0.3px">Chi tiền</div><div class="c c5"><i class="cb"></i></div><div class="c c6" style="letter-spacing:-1.073px">TUPTC</div><div class="c c7" style="letter-spacing:-0.185px">13/03/2014</div></div>
<div class="r alt" style="top:520px"><div class="c rh"><span>14</span></div><div class="c c1" style="letter-spacing:-0.7px">CTK</div><div class="c c2" style="letter-spacing:-0.287px">Chi khác</div><div class="c c3">2</div><div class="c c4" style="letter-spacing:-0.3px">Chi tiền</div><div class="c c5"><i class="cb"></i></div><div class="c c6" style="letter-spacing:-0.829px">ADMIN</div><div class="c c7" style="letter-spacing:-0.185px">15/08/2013</div></div>
<div class="r" style="top:542px"><div class="c rh"><span>15</span></div><div class="c c1" style="letter-spacing:-0.516px">CTKNV</div><div class="c c2" style="letter-spacing:-0.143px">Chi khác cho nhân viên</div><div class="c c3">2</div><div class="c c4" style="letter-spacing:-0.3px">Chi tiền</div><div class="c c5"><i class="cb"></i></div><div class="c c6" style="letter-spacing:-0.829px">ADMIN</div><div class="c c7" style="letter-spacing:-0.185px">15/08/2013</div></div>
<div class="r alt" style="top:564px"><div class="c rh"><span>16</span></div><div class="c c1" style="letter-spacing:-0.847px">CTKTLH</div><div class="c c2" style="letter-spacing:-0.176px">Chi do khách trả lại hàng</div><div class="c c3">2</div><div class="c c4" style="letter-spacing:-0.3px">Chi tiền</div><div class="c c5"><i class="cb"></i></div><div class="c c6" style="letter-spacing:-0.829px">ADMIN</div><div class="c c7" style="letter-spacing:-0.185px">15/08/2013</div></div>
<div class="r" style="top:586px"><div class="c rh"><span>17</span></div><div class="c c1" style="letter-spacing:-0.551px">CTKTV</div><div class="c c2" style="letter-spacing:-0.083px">Chi trả các khoản tiền vay</div><div class="c c3">2</div><div class="c c4" style="letter-spacing:-0.3px">Chi tiền</div><div class="c c5"><i class="cb"></i></div><div class="c c6" style="letter-spacing:-0.829px">ADMIN</div><div class="c c7" style="letter-spacing:-0.185px">15/08/2013</div></div>
<div class="r alt" style="top:608px"><div class="c rh"><span>18</span></div><div class="c c1" style="letter-spacing:-0.86px">CTL</div><div class="c c2" style="letter-spacing:-0.272px">Chi tiền lương</div><div class="c c3">2</div><div class="c c4" style="letter-spacing:-0.3px">Chi tiền</div><div class="c c5"><i class="cb"></i></div><div class="c c6" style="letter-spacing:-1.073px">TUPTC</div><div class="c c7" style="letter-spacing:-0.185px">16/01/2014</div></div>
<div class="r lk" style="top:630px"><div class="c rh"><span>19</span></div><div class="c c1" style="letter-spacing:-0.871px">CTLT</div><div class="c c2" style="letter-spacing:-0.151px">Chi lương và thưởng cho nhân viên</div><div class="c c3">2</div><div class="c c4" style="letter-spacing:-0.3px">Chi tiền</div><div class="c c5"><i class="cb"><svg width="9" height="9" viewBox="0 0 9 9"><path d="M1.2 3.8 L3.4 6.8 L7.6 1" fill="none" stroke="#3c4b98" stroke-width="1.6"/></svg></i></div><div class="c c6" style="letter-spacing:-0.829px">ADMIN</div><div class="c c7" style="letter-spacing:-0.185px">15/08/2013</div></div>
<div class="r alt" style="top:652px"><div class="c rh"><span>20</span></div><div class="c c1" style="letter-spacing:-0.5px">CTLV</div><div class="c c2" style="letter-spacing:-0.215px">Chi tiền lãi vay</div><div class="c c3">2</div><div class="c c4" style="letter-spacing:-0.3px">Chi tiền</div><div class="c c5"><i class="cb"></i></div><div class="c c6" style="letter-spacing:-0.829px">ADMIN</div><div class="c c7" style="letter-spacing:-0.185px">15/08/2013</div></div>
<div class="r" style="top:674px"><div class="c rh"><span>21</span></div><div class="c c1" style="letter-spacing:-0.776px">CTMSTSCĐ</div><div class="c c2" style="letter-spacing:-0.412px">Chi mua sắm TSCĐ</div><div class="c c3">2</div><div class="c c4" style="letter-spacing:-0.3px">Chi tiền</div><div class="c c5"><i class="cb"></i></div><div class="c c6" style="letter-spacing:-0.829px">ADMIN</div><div class="c c7" style="letter-spacing:-0.185px">15/08/2013</div></div>
</div>
<!-- scrollbar -->
<div class="abs" style="left:1214px;top:211px;width:17px;height:483px;background:linear-gradient(90deg,#7f9cc6 0,#8ca8d0 50%,#93add4 100%)"></div>
<div class="abs" style="left:1214px;top:211px;width:17px;height:17px;background:linear-gradient(90deg,#a8c0e4,#8eaad4)"></div>
<div class="abs" style="left:1218px;top:216px;width:0;height:0;border-left:4.5px solid transparent;border-right:4.5px solid transparent;border-bottom:5px solid #4a5a85"></div>
<div class="abs" style="left:1214px;top:228px;width:17px;height:152px;border:1px solid #4f6398;border-radius:2px;box-shadow:inset 0 0 0 1px #f4f6fa;background:linear-gradient(90deg,#e9ecf2 0,#e3e7ee 36%,#ccd6e5 42%,#b9c7dc 100%)"></div>
<div class="abs" style="left:1218px;top:301px;width:9px;height:7px;background:repeating-linear-gradient(#8a97ac 0,#8a97ac 1px,transparent 1px,transparent 2px)"></div>
<div class="abs" style="left:1218px;top:684px;width:0;height:0;border-left:4.5px solid transparent;border-right:4.5px solid transparent;border-top:5px solid #4a5a85"></div>

<div id="status"></div>
<svg class="abs" style="left:4px;top:709px" width="15" height="14" viewBox="0 0 15 14"><path d="M1.5 4.5 L7.2 4.5 L7.2 1.4 L13.4 7 L7.2 12.6 L7.2 9.5 L1.5 9.5 Z" fill="#6fd43c" stroke="#35a11f" stroke-width="1" stroke-linejoin="round"/><path d="M2.4 5.4 H8 V3.6 L11.6 6.6" fill="none" stroke="#a5ea7e" stroke-width=".9"/></svg>
<div class="ssep" style="left:28px"></div>
<div class="ssep" style="left:961px"></div>
<div class="ssep" style="left:1067px"></div>
<div class="abs" style="left:1071.5px;top:708px"><svg width="16" height="16" viewBox="0 0 16 16"><circle cx="5.6" cy="3.6" r="2.6" fill="#4a3a2a"/><circle cx="5.6" cy="4.4" r="1.9" fill="#f0c29a"/><path d="M.6 11.6 Q.8 7.2 5.6 7.2 Q9 7.2 9.6 9.6 L9.6 11.6 Z" fill="#4fb53c" stroke="#2f8a22" stroke-width=".6"/><path d="M7 8.4 Q7 3.6 10.6 3.6 Q14.2 3.6 14.2 8.4 L14.6 10.6 H6.6 Z" fill="#2e2622"/><circle cx="10.6" cy="7.4" r="2.2" fill="#f3c9a5"/><path d="M5.6 15.2 Q5.8 10.6 10.6 10.6 Q15.4 10.6 15.6 15.2 Z" fill="#f0642c" stroke="#c2441a" stroke-width=".6"/></svg></div>
<div class="st" style="left:1090.1000000000001px;letter-spacing:-0.253px">ADMIN</div>
<div class="ssep" style="left:1137px"></div>
<div class="abs" style="left:1143px;top:708px"><svg width="14" height="16" viewBox="0 0 14 16"><path d="M2.2 1.4 L9.6 .6 L12.4 2 L12.4 13.6 L9.6 15 L2.2 13.8 Z" fill="#b9b3e3" stroke="#7d76b8" stroke-width=".7"/><path d="M9.6 .6 L12.4 2 L12.4 13.6 L9.6 15 Z" fill="#8f88cc"/><path d="M3.4 3.2 L8.4 2.8 M3.4 5 L8.4 4.7" stroke="#6e67a8" stroke-width=".8"/><circle cx="11" cy="8.6" r=".7" fill="#ffd23a"/><circle cx="5" cy="11" r="4" fill="#3fae2c" stroke="#23801a" stroke-width=".7"/><path d="M2.9 11 L4.5 12.8 L7.2 9.4" fill="none" stroke="#fff" stroke-width="1.5" stroke-linecap="round" stroke-linejoin="round"/></svg></div>
<div class="st" style="left:1159.9px;letter-spacing:-0.817px">TP</div>
<div class="ssep" style="left:1184px"></div>
<div class="abs" style="left:1188.6px;top:707.6px"><svg width="16" height="17" viewBox="0 0 16 17"><defs><linearGradient id="dbg" x1="0" y1="0" x2="1" y2="0"><stop offset="0" stop-color="#fbe9a0"/><stop offset=".45" stop-color="#f4c232"/><stop offset="1" stop-color="#c98a10"/></linearGradient></defs><path d="M4 2.8 V13.6 A5.4 2.2 0 0 0 14.8 13.6 V2.8 Z" fill="url(#dbg)" stroke="#a8720c" stroke-width=".7"/><ellipse cx="9.4" cy="2.8" rx="5.4" ry="2.2" fill="#fdf0b4" stroke="#a8720c" stroke-width=".7"/><rect x=".8" y="7.4" width="5" height="6.4" fill="#eef2f8" stroke="#4d5f86" stroke-width=".7"/><path d="M3.4 9 H9.2 L10.6 10.4 V16 H3.4 Z" fill="#fafcff" stroke="#4d5f86" stroke-width=".7"/><path d="M5 11.6 H9 M5 13.4 H9" stroke="#7f93bd" stroke-width=".8"/></svg></div>
<div class="st" style="left:1206.3000000000002px;letter-spacing:-0.031px">JUNSKY.ERP</div>
<div class="ssep" style="left:1291px"></div>
<div class="abs" style="left:1296px;top:708px"><svg width="16" height="16" viewBox="0 0 16 16"><defs><radialGradient id="glb" cx="40%" cy="35%" r="70%"><stop offset="0" stop-color="#b5ef8a"/><stop offset=".6" stop-color="#3fb83a"/><stop offset="1" stop-color="#1f7fa8"/></radialGradient><linearGradient id="scr" x1="0" y1="0" x2="1" y2="1"><stop offset="0" stop-color="#6cc0ff"/><stop offset="1" stop-color="#1c6fd6"/></linearGradient></defs><circle cx="6" cy="6" r="5.6" fill="url(#glb)" stroke="#2a8a5a" stroke-width=".5"/><path d="M5.2 3.6 L14.6 2.8 L14.8 11 L5.8 12 Z" fill="#dfe5ee" stroke="#8a93a5" stroke-width=".6"/><path d="M6.2 4.5 L13.7 3.8 L13.9 10.2 L6.7 11 Z" fill="url(#scr)"/><path d="M8.6 12 L12 11.6 L12.8 14.2 L7.6 15 Z" fill="#c9ced8" stroke="#8a93a5" stroke-width=".5"/><path d="M6.4 15.4 L13.6 14.4" stroke="#a8afbc" stroke-width="1.2"/></svg></div>
<div class="st" style="left:1313.1000000000001px;letter-spacing:-0.124px">JUNSKY</div>

</body></html>
